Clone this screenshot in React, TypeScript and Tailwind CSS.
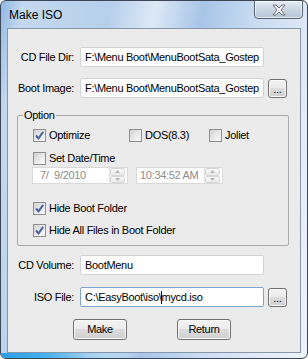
import React from "react";

const Check = ({ checked }: { checked?: boolean }) => (
  <span className="w-[13px] h-[13px] shrink-0 border border-[#8e8f8f] bg-[linear-gradient(135deg,#d2d2d2,#ececec_60%,#fbfbfb)] flex items-center justify-center">
    {checked && (
      <svg width="11" height="11" viewBox="0 0 11 11">
        <path d="M2 5.5 L4.5 8.3 L9.2 1.8" fill="none" stroke="#4a63a0" strokeWidth="2" />
      </svg>
    )}
  </span>
);

const Box = ({ children, className = "" }: { children: React.ReactNode; className?: string }) => (
  <div
    className={`h-[20px] bg-white border rounded-[2px] flex items-center pl-[4px] whitespace-nowrap overflow-hidden ${className}`}
  >
    {children}
  </div>
);

const Btn = ({ label, className = "" }: { label: string; className?: string }) => (
  <div
    className={`border border-[#707070] rounded-[3px] bg-[linear-gradient(#f3f3f3,#ebebeb_45%,#dddddd_50%,#cfcfcf)] flex items-center justify-center shadow-[inset_0_0_0_1px_#fbfbfb] ${className}`}
  >
    {label}
  </div>
);

const Spin = () => (
  <div className="w-[16px] h-full flex flex-col border-l border-[#e3e3e3]">
    <div className="flex-1 border border-[#d6d6d6] rounded-[2px] bg-[linear-gradient(#f8f8f8,#e9e9e9)] flex items-center justify-center">
      <svg width="5" height="3" viewBox="0 0 5 3">
        <path d="M0 3 L2.5 0 L5 3 Z" fill="#b5b5b5" />
      </svg>
    </div>
    <div className="flex-1 border border-[#d6d6d6] rounded-[2px] bg-[linear-gradient(#f8f8f8,#e9e9e9)] flex items-center justify-center">
      <svg width="5" height="3" viewBox="0 0 5 3">
        <path d="M0 0 L2.5 3 L5 0 Z" fill="#b5b5b5" />
      </svg>
    </div>
  </div>
);

const Row = ({ label, children }: { label: string; children: React.ReactNode }) => (
  <div className="flex items-center h-[20px]">
    <div className="w-[66px] text-right">{label}</div>
    {children}
  </div>
);

export default function App() {
  return (
    <div className="w-[308px] h-[359px] bg-white font-['Liberation_Sans',Arial,sans-serif] text-[11px] tracking-[-0.3px] text-black">
      <div className="relative w-[308px] h-[359px] rounded-[6px] border border-[#3b4656] overflow-hidden flex flex-col bg-[linear-gradient(100deg,#8fb8e4_0%,#c4d8ef_6%,#b7cfec_30%,#dde9f6_42%,#a8c5e8_55%,#c9dcf2_70%,#e3ecf7_88%,#edf2f9_100%)]">
        <div className="h-[27px] shrink-0 flex items-center pl-[8px] pt-[1px] text-[12px] tracking-normal font-normal font-['Liberation_Sans',Arial,sans-serif]">
          Make ISO
        </div>
        <div className="absolute top-[-1px] left-[253px] w-[49px] h-[19px] rounded-b-[4px] border border-[#5b6470] bg-[linear-gradient(#e4ecf5,#c9d6e4_50%,#b6c6d8)] shadow-[inset_0_0_0_1px_rgba(255,255,255,0.6)] flex items-center justify-center">
          <svg width="16" height="12" viewBox="0 0 16 12">
            <path
              d="M2 1 L5 1 L8 4 L11 1 L14 1 L10 6 L14 11 L11 11 L8 8 L5 11 L2 11 L6 6 Z"
              fill="#f4f6f8"
              stroke="#6b7077"
              strokeWidth="1"
            />
          </svg>
        </div>

        <div className="ml-[6px] w-[294px] h-[325px] shrink-0 border border-[#8596ab] bg-[#ebebeb] pt-[18px]">
          <Row label="CD File Dir:">
            <Box className="ml-[6px] w-[184px] border-[#cfd3d8]">F:\Menu Boot\MenuBootSata_Gostep</Box>
          </Row>
          <div className="mt-[11px]">
            <Row label="Boot Image:">
              <Box className="ml-[6px] w-[184px] border-[#cfd3d8]">F:\Menu Boot\MenuBootSata_Gostep</Box>
              <Btn label="..." className="ml-[4px] w-[19px] h-[19px] items-end pb-[2px] leading-none" />
            </Row>
          </div>

          <div className="relative mt-[17px] ml-[9px] w-[272px] h-[131px] border border-[#a9a9a9] rounded-[2px]">
            <span className="absolute top-[-8px] left-[5px] px-[1px] bg-[#ebebeb] leading-[14px]">Option</span>
            <div className="flex items-center h-[13px] mt-[13px] pl-[15px]">
              <div className="w-[96px] flex items-center gap-[3px]">
                <Check checked />
                <span>Optimize</span>
              </div>
              <div className="w-[80px] flex items-center gap-[3px]">
                <Check />
                <span>DOS(8.3)</span>
              </div>
              <div className="flex items-center gap-[3px]">
                <Check />
                <span>Joliet</span>
              </div>
            </div>
            <div className="flex items-center h-[13px] mt-[10px] pl-[15px] gap-[3px]">
              <Check />
              <span>Set Date/Time</span>
            </div>
            <div className="flex mt-[2px] ml-[14px] gap-[8px] h-[17px] text-[#8b8b8b]">
              <div className="w-[96px] h-full bg-white border border-[#d9d9d9] flex items-center justify-between pl-[7px]">
                <span>7/&nbsp; 9/2010</span>
                <div className="h-full flex pr-[2px]">
                  <Spin />
                </div>
              </div>
              <div className="w-[87px] h-full bg-white border border-[#d9d9d9] flex items-center justify-between pl-[3px]">
                <span>10:34:52 AM</span>
                <div className="h-full flex pr-[2px]">
                  <Spin />
                </div>
              </div>
            </div>
            <div className="flex items-center h-[13px] mt-[18px] pl-[15px] gap-[3px]">
              <Check checked />
              <span>Hide Boot Folder</span>
            </div>
            <div className="flex items-center h-[13px] mt-[9px] pl-[15px] gap-[3px]">
              <Check checked />
              <span>Hide All Files in Boot Folder</span>
            </div>
          </div>

          <div className="mt-[9px]">
            <Row label="CD Volume:">
              <Box className="ml-[6px] w-[184px] border-[#cfd3d8]">BootMenu</Box>
            </Row>
          </div>
          <div className="mt-[12px]">
            <Row label="ISO File:">
              <Box className="ml-[6px] w-[184px] border-[#7ea4cf]">
                <span>C:\EasyBoot\iso\</span>
                <span className="w-[1px] h-[13px] bg-black -ml-[1px]" />
                <span>mycd.iso</span>
              </Box>
              <Btn label="..." className="ml-[4px] w-[19px] h-[19px] items-end pb-[2px] leading-none" />
            </Row>
          </div>
          <div className="flex mt-[12px] pl-[65px] gap-[50px]">
            <Btn label="Make" className="w-[54px] h-[21px]" />
            <Btn label="Return" className="w-[54px] h-[21px]" />
          </div>
        </div>
        <div className="flex-1 bg-[linear-gradient(to_right,#2a9fe6,#47b1ec_15%,#a8d2f0_30%,transparent_45%)]" />
      </div>
    </div>
  );
}
